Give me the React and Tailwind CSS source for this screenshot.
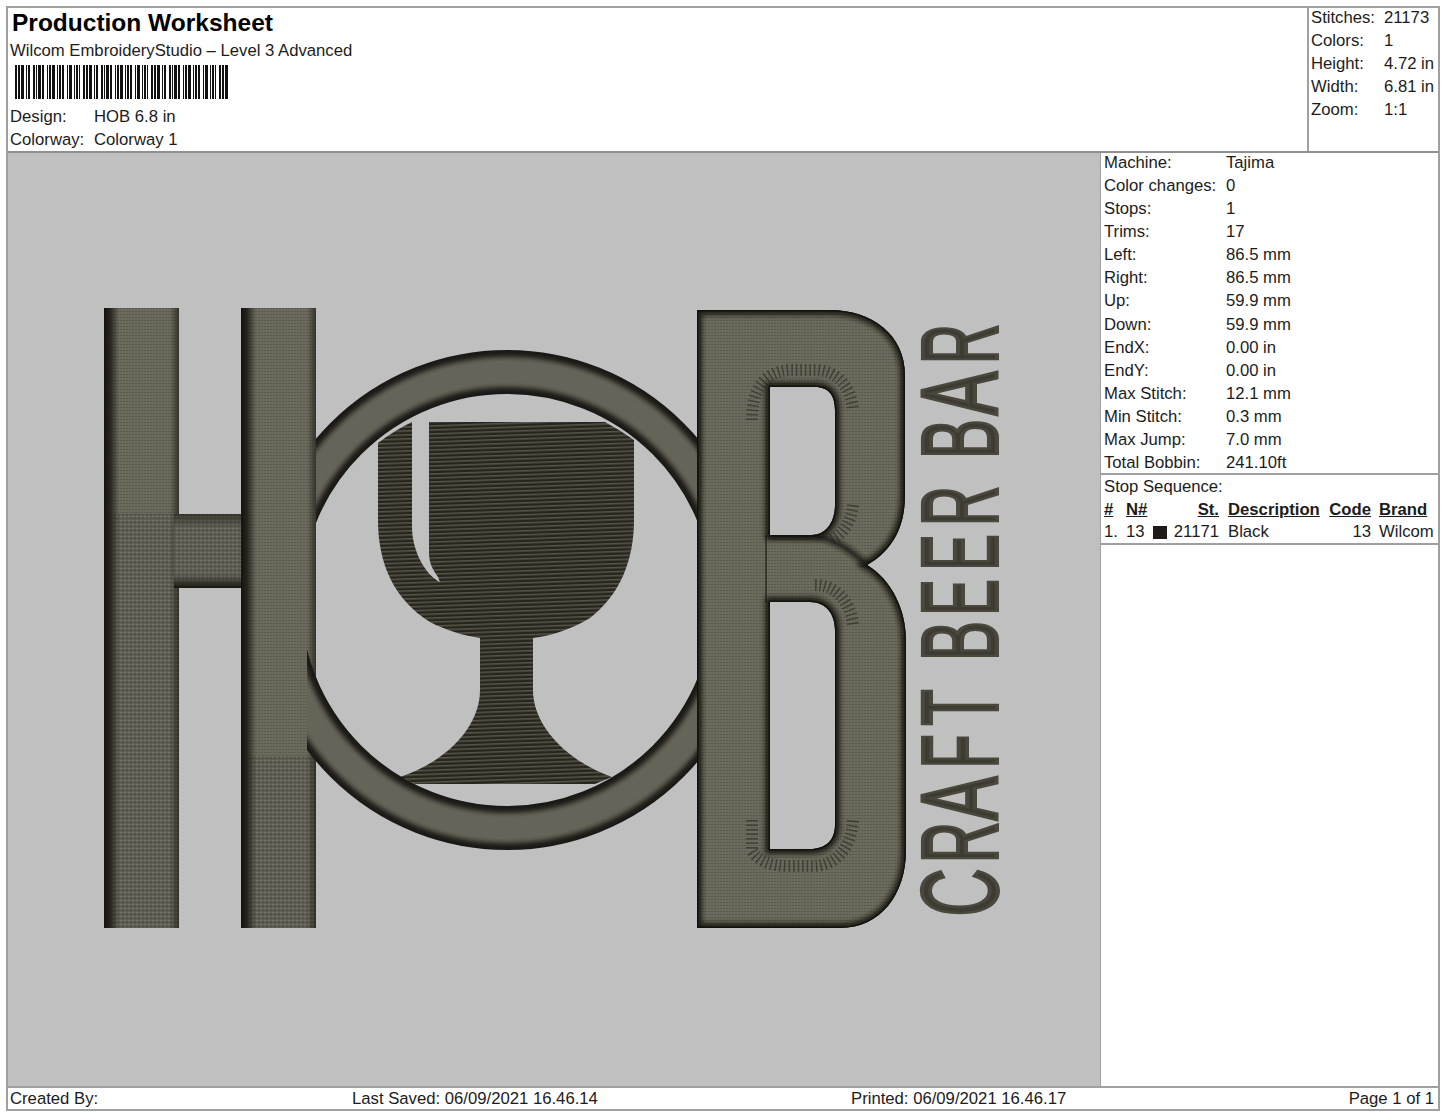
const statsTop = [
  ['Stitches:', '21173'],
  ['Colors:', '1'],
  ['Height:', '4.72 in'],
  ['Width:', '6.81 in'],
  ['Zoom:', '1:1'],
]

const machineRows = [
  ['Machine:', 'Tajima'],
  ['Color changes:', '0'],
  ['Stops:', '1'],
  ['Trims:', '17'],
  ['Left:', '86.5 mm'],
  ['Right:', '86.5 mm'],
  ['Up:', '59.9 mm'],
  ['Down:', '59.9 mm'],
  ['EndX:', '0.00 in'],
  ['EndY:', '0.00 in'],
  ['Max Stitch:', '12.1 mm'],
  ['Min Stitch:', '0.3 mm'],
  ['Max Jump:', '7.0 mm'],
  ['Total Bobbin:', '241.10ft'],
]

// letter, lower end and upper end of its ink along the page height
const craftLetters = [
  ['C', 915, 870],
  ['R', 862, 823],
  ['A', 822, 775],
  ['F', 768, 735],
  ['T', 725, 690],
  ['B', 660, 622],
  ['E', 615, 580],
  ['E', 570, 535],
  ['R', 525, 487],
  ['B', 458, 420],
  ['A', 417, 370],
  ['R', 363, 325],
]

// bar, gap, bar, gap ... repeated along the code
const barWidths = [2, 1, 2, 1, 3, 2, 1, 1, 2, 3, 2, 1, 1, 1, 3, 1, 2, 3, 1, 1, 2, 1, 3, 2, 1, 1, 2, 1, 2, 3, 1, 1, 3, 2, 1, 1, 2, 1, 1, 3]

function Barcode() {
  const bars = []
  let x = 0
  let i = 0
  while (x < 214) {
    const w = barWidths[i % barWidths.length]
    if (i % 2 === 0) bars.push(<rect key={i} x={x} y="0" width={w} height="34" fill="#111" />)
    x += w
    i++
  }
  return (
    <svg width="214" height="34" viewBox="0 0 214 34" className="block">
      {bars}
    </svg>
  )
}

const bPath =
  'M697 310 H830 C872 310 905 335 905 375 V495 C905 530 890 552 867 565 C892 580 906 610 906 640 V850 C906 895 880 928 840 928 H697 Z ' +
  'M770 387 H815 C829 387 835 396 835 410 V505 C835 522 826 535 812 535 H770 Z ' +
  'M770 602 H810 C826 602 835 614 835 630 V825 C835 840 826 849 810 849 H770 Z'

const glassPath =
  'M412 422 Q395 430 378 443 V520 C378 565 395 600 430 622 C445 630 465 636 480 638 V690 C480 725 450 760 400 777 L415 784 H595 L612 777 C565 760 533 725 533 690 V638 C550 636 570 630 590 618 C620 595 634 560 634 520 V440 Q620 430 605 422 H429 V553 C429 563 433 570 438 577 L440 582 C425 575 412 550 412 527 Z'

function Bar({ x, w, splitY }) {
  return (
    <g>
      <rect x={x} y="308" width={w} height="620" fill="url(#thread)" />
      <rect x={x} y={splitY} width={w} height={928 - splitY} fill="url(#threadDark)" />
      <rect x={x} y="308" width={w} height="620" fill="url(#barShade)" />
    </g>
  )
}

function CraftLetter({ letter, from, to }) {
  const ink = from - to - 4
  const side = letter === 'A' ? 0 : ink * 0.08
  return (
    <text
      transform={`translate(996.5 ${from - 2 + side}) rotate(-90)`}
      textLength={ink + side * 2}
      lengthAdjust="spacingAndGlyphs"
      fontSize="108"
      fill="#3d3b32"
      stroke="#4a483d"
      strokeWidth="4"
      className="font-['Liberation_Sans']"
    >
      {letter}
    </text>
  )
}

function Logo() {
  return (
    <svg viewBox="8 153 1092 935" width="1092" height="935" className="block">
      <defs>
        <pattern id="thread" width="3" height="3" patternUnits="userSpaceOnUse">
          <rect width="3" height="3" fill="#6c6a5d" />
          <rect y="2" width="2" height="1" fill="#5a584c" />
        </pattern>
        <pattern id="threadDark" width="4" height="4" patternUnits="userSpaceOnUse">
          <rect width="4" height="4" fill="#605e53" />
          <rect width="2" height="1" fill="#77756a" />
          <rect x="2" y="2" width="2" height="1" fill="#4c4a40" />
        </pattern>
        <pattern id="glassLines" width="6" height="4" patternUnits="userSpaceOnUse" patternTransform="rotate(-2)">
          <rect width="6" height="4" fill="#35322a" />
          <rect y="0" width="6" height="1.4" fill="#575448" />
          <rect y="2.4" width="6" height="1.2" fill="#1f1c16" />
        </pattern>
        <linearGradient id="barShade" x1="0" x2="1" y1="0" y2="0">
          <stop offset="0" stopColor="#14120e" />
          <stop offset="0.08" stopColor="#1f1c16" stopOpacity="0.9" />
          <stop offset="0.2" stopColor="#1f1c16" stopOpacity="0" />
          <stop offset="0.88" stopColor="#1f1c16" stopOpacity="0" />
          <stop offset="1" stopColor="#1f1c16" stopOpacity="0.7" />
        </linearGradient>
        <linearGradient id="crossShade" x1="0" x2="0" y1="0" y2="1">
          <stop offset="0" stopColor="#1f1c16" stopOpacity="0.6" />
          <stop offset="0.18" stopColor="#1f1c16" stopOpacity="0" />
          <stop offset="0.82" stopColor="#1f1c16" stopOpacity="0" />
          <stop offset="1" stopColor="#14120e" stopOpacity="0.95" />
        </linearGradient>
        <filter id="soft" x="-10%" y="-10%" width="120%" height="120%">
          <feGaussianBlur stdDeviation="2.5" />
        </filter>
        <clipPath id="ringClip">
          <rect x="316" y="300" width="400" height="300" />
          <rect x="307" y="600" width="400" height="300" />
        </clipPath>
        <clipPath id="bClip">
          <path d={bPath} clipRule="evenodd" />
        </clipPath>
      </defs>

      {/* H */}
      <Bar x={104} w={75} splitY={514} />
      <Bar x={241} w={75} splitY={755} />
      <rect x="174" y="514" width="67" height="74" fill="url(#threadDark)" />
      <rect x="174" y="514" width="67" height="74" fill="url(#crossShade)" />

      {/* goblet */}
      <path d={glassPath} fill="url(#glassLines)" />

      {/* ring */}
      <g clipPath="url(#ringClip)">
        <circle cx="507" cy="600" r="228" fill="none" stroke="#1b1915" strokeWidth="44" />
        <circle cx="507" cy="600" r="228" fill="none" stroke="#666458" strokeWidth="30" filter="url(#soft)" />
      </g>

      {/* B */}
      <path d={bPath} fill="url(#thread)" fillRule="evenodd" />
      <g clipPath="url(#bClip)" fill="none">
        <path d={bPath} stroke="#14120e" strokeWidth="10" opacity="0.9" filter="url(#soft)" />
        <path d={bPath} stroke="#14120e" strokeWidth="3" />
        <path d="M770 535 H808 C835 537 852 552 867 565" stroke="#14120e" strokeWidth="5" filter="url(#soft)" />
        <path d="M766 535 V602" stroke="#14120e" strokeWidth="2" opacity="0.55" />
        <g stroke="#23201a" strokeWidth="12" strokeDasharray="1.5 3" opacity="0.55">
          <path d="M752 420 C752 395 760 372 790 370 H815 C835 370 851 385 853 410" />
          <path d="M853 505 C851 522 843 535 830 540" />
          <path d="M815 585 C835 585 850 600 853 625" />
          <path d="M752 820 V850 Q760 866 790 866 H812 C835 866 851 850 853 820" />
        </g>
      </g>

      {/* side lettering */}
      {craftLetters.map(([letter, from, to]) => (
        <CraftLetter key={from} letter={letter} from={from} to={to} />
      ))}
    </svg>
  )
}

export default function App() {
  return (
    <div className="w-[1445px] h-[1117px] bg-white pt-[6px] pl-[6px] font-['Liberation_Sans',Arial,sans-serif] text-[16.7px] text-[#1c1c1c]">
      <div className="w-[1434px] h-[1105px] border-2 border-[#a0a0a0] flex flex-col">
        {/* header */}
        <div className="h-[145px] flex border-b-2 border-[#8f8f8f]">
          <div className="flex-1 pl-[2px]">
            <div className="h-[29px] leading-[29px] pl-[2px] text-[24.5px] font-bold text-black">Production Worksheet</div>
            <div className="h-[24px] leading-[28px]">Wilcom EmbroideryStudio – Level 3 Advanced</div>
            <div className="pl-[5px] pt-[4px] h-[44px]">
              <Barcode />
            </div>
            <div className="flex h-[23px] leading-[23px]">
              <span className="w-[84px]">Design:</span>
              <span>HOB 6.8 in</span>
            </div>
            <div className="flex h-[23px] leading-[23px]">
              <span className="w-[84px]">Colorway:</span>
              <span>Colorway 1</span>
            </div>
          </div>
          <div className="w-[131px] border-l-2 border-[#a0a0a0] pl-[2px]">
            {statsTop.map(([label, value]) => (
              <div key={label} className="flex h-[23px] leading-[19px]">
                <span className="w-[73px]">{label}</span>
                <span>{value}</span>
              </div>
            ))}
          </div>
        </div>

        {/* body */}
        <div className="flex-1 flex min-h-0">
          <div className="w-[1092px] bg-[#c0c0c0] overflow-hidden">
            <Logo />
          </div>
          <div className="flex-1 border-l border-[#a0a0a0] flex flex-col">
            <div className="h-[322px] pl-[3px] border-b-2 border-[#a0a0a0]">
              {machineRows.map(([label, value]) => (
                <div key={label} className="flex h-[23.08px] leading-[19px]">
                  <span className="w-[122px] whitespace-nowrap">{label}</span>
                  <span>{value}</span>
                </div>
              ))}
            </div>
            <div className="h-[70px] pl-[3px] border-b-2 border-[#a0a0a0]">
              <div className="h-[23px] leading-[23px]">Stop Sequence:</div>
              <div className="grid grid-cols-[22px_27px_66px_104px_48px_1fr] h-[23px] leading-[23px] font-bold whitespace-nowrap">
                <span className="underline">#</span>
                <span className="underline">N#</span>
                <span className="underline text-right">St.</span>
                <span className="underline pl-[9px]">Description</span>
                <span className="underline text-right">Code</span>
                <span className="underline pl-[8px]">Brand</span>
              </div>
              <div className="grid grid-cols-[22px_27px_66px_104px_48px_1fr] h-[22px] leading-[22px]">
                <span>1.</span>
                <span>13</span>
                <span className="flex justify-between items-center">
                  <span className="w-[14px] h-[13px] bg-[#1f1a17]" />
                  <span>21171</span>
                </span>
                <span className="pl-[9px]">Black</span>
                <span className="text-right">13</span>
                <span className="pl-[8px]">Wilcom</span>
              </div>
            </div>
            <div className="flex-1" />
          </div>
        </div>

        {/* footer */}
        <div className="h-[23px] flex border-t-2 border-[#a0a0a0] pl-[2px] pr-[4px] leading-[21px]">
          <span className="w-[342px]">Created By:</span>
          <span className="w-[499px]">Last Saved: 06/09/2021 16.46.14</span>
          <span>Printed: 06/09/2021 16.46.17</span>
          <span className="ml-auto">Page 1 of 1</span>
        </div>
      </div>
    </div>
  )
}
